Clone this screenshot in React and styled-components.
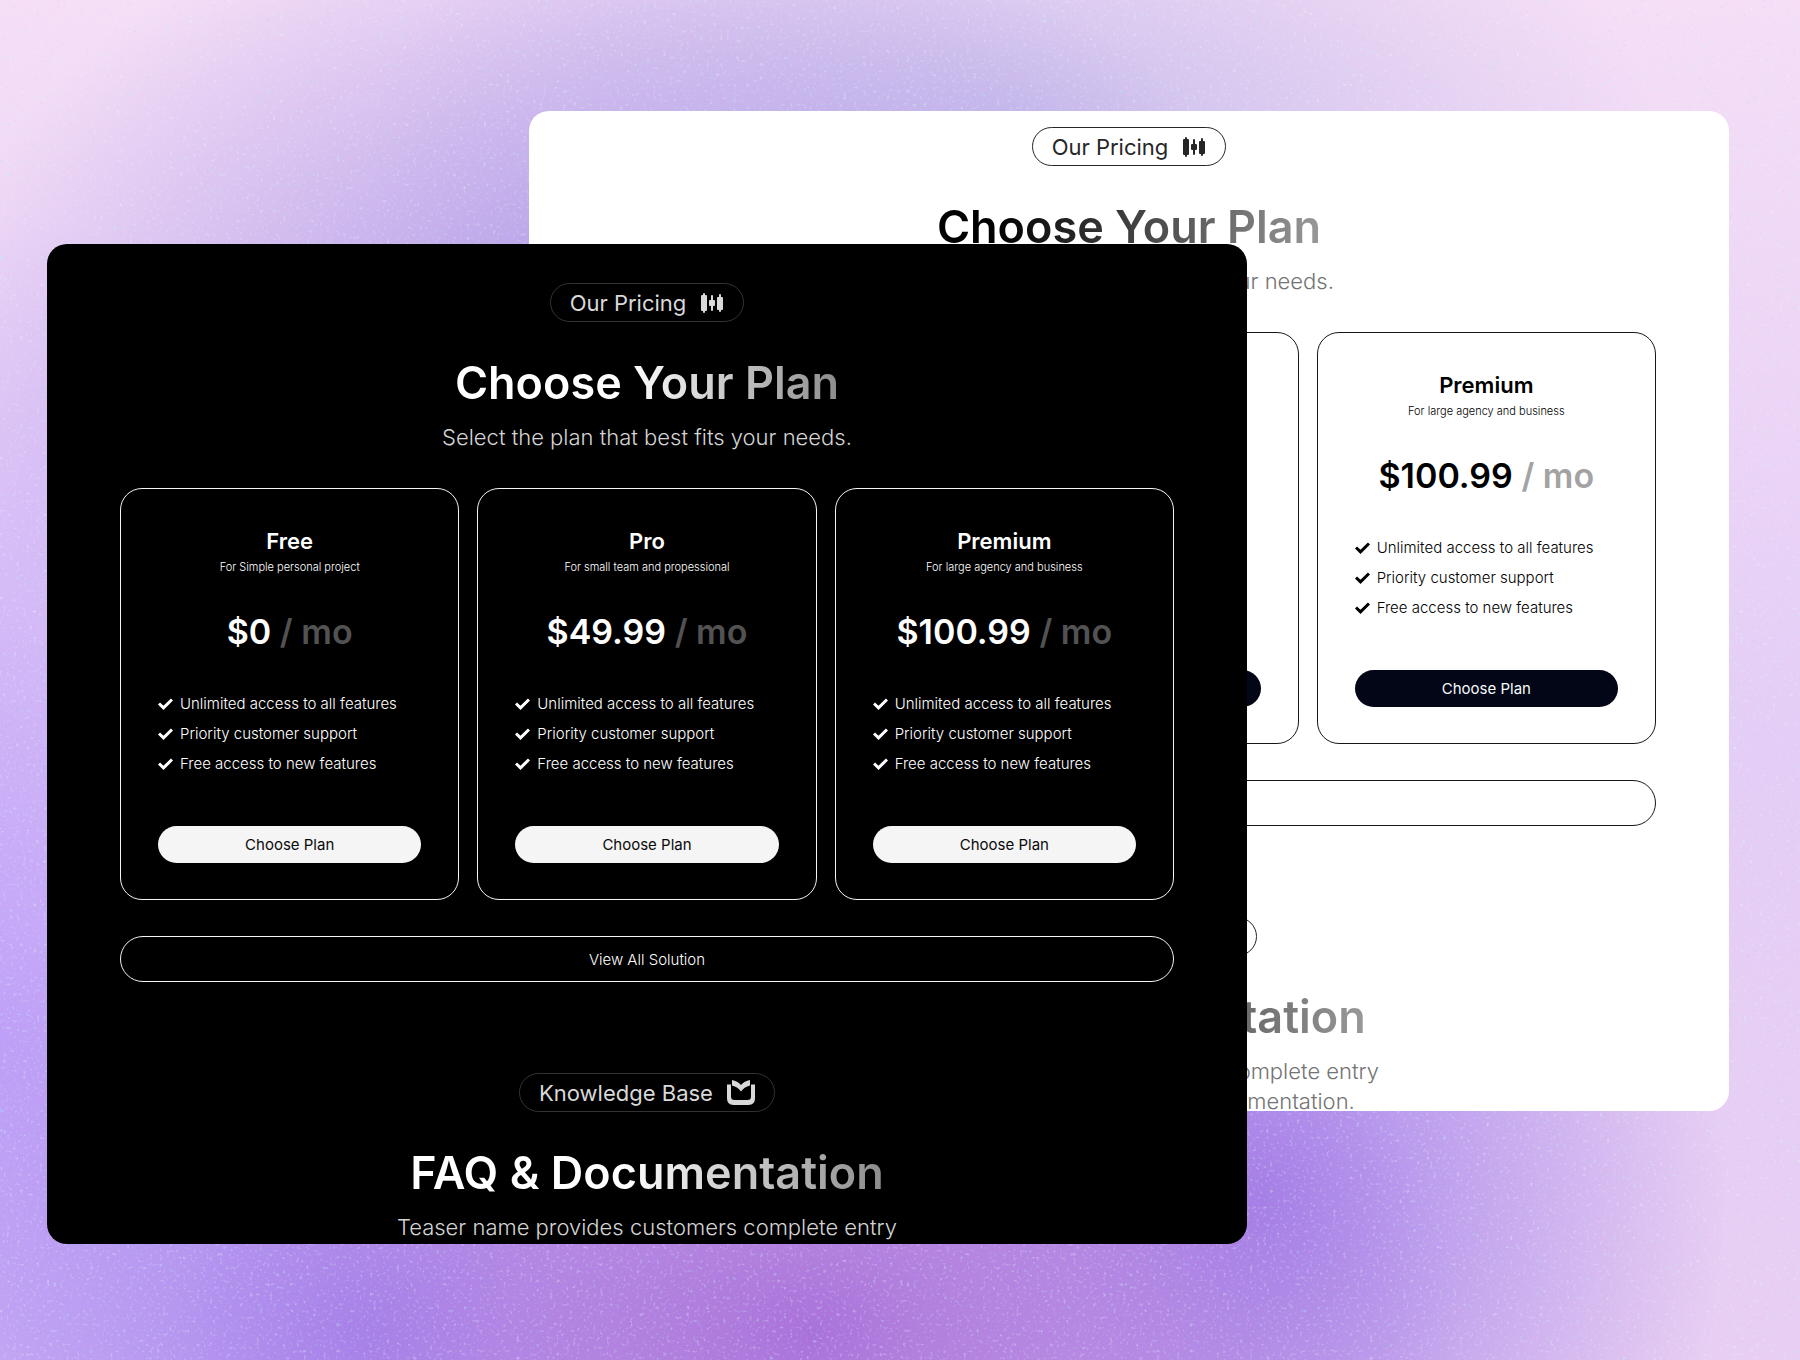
import React from 'react';
import styled, { createGlobalStyle, ThemeProvider } from 'styled-components';

const dark = {
  background: '#000000',
  text: '#ffffff',
  muted: '#d4d4d4',
  badgeText: '#d9d9d9',
  badgeBorder: '#333333',
  border: '#f5f5f5',
  period: '#525252',
  button: '#f5f5f5',
  buttonText: '#0a0a0a',
  heading: 'linear-gradient(90deg, #ffffff 45%, #8c8c8c 100%)',
};

const light = {
  background: '#ffffff',
  text: '#000000',
  muted: '#737373',
  badgeText: '#262626',
  badgeBorder: '#262626',
  border: '#171717',
  period: '#a3a3a3',
  button: '#020617',
  buttonText: '#f8fafc',
  heading: 'linear-gradient(90deg, #000000 15%, #999999 100%)',
};

const GlobalStyle = createGlobalStyle`
  * {
    box-sizing: border-box;
  }

  body {
    margin: 0;
    font-family: Inter, 'Liberation Sans', sans-serif;
  }

  h1, h2, h3, p, ul {
    margin: 0;
    padding: 0;
    font-weight: inherit;
  }
`;

const Stage = styled.main`
  position: relative;
  min-height: 100vh;
  overflow: hidden;
  background:
    radial-gradient(ellipse 36% 36% at 45% 98%, #a972da 0%, rgba(169, 114, 218, 0) 100%),
    radial-gradient(ellipse 30% 36% at 20% 98%, #a687ee 0%, rgba(166, 135, 238, 0) 100%),
    radial-gradient(ellipse 26% 40% at 70% 88%, #a583ea 0%, rgba(165, 131, 234, 0) 100%),
    radial-gradient(ellipse 30% 60% at 0% 76%, #c0a2f8 0%, rgba(192, 162, 248, 0) 100%),
    radial-gradient(ellipse 38% 36% at 34% 27%, #ac98e6 0%, rgba(172, 152, 230, 0) 100%),
    radial-gradient(ellipse 36% 22% at 56% 10%, #c9bdec 0%, rgba(201, 189, 236, 0) 100%),
    linear-gradient(180deg, #f5def6 0%, #e4cdf6 55%, #e8cef2 100%);
`;

const Grain = styled.svg`
  position: absolute;
  inset: 0;
  width: 100%;
  height: 100%;
  opacity: 0.35;
`;

const Window = styled.section`
  position: absolute;
  left: ${props => props.$left};
  top: ${props => props.$top};
  width: 1200px;
  height: 1000px;
  max-width: 100%;
  padding: ${props => props.$padding} 73px 0;
  overflow: hidden;
  border-radius: 20px;
  background: ${props => props.theme.background};
  color: ${props => props.theme.text};
`;

const Intro = styled.header`
  display: flex;
  flex-direction: column;
  align-items: center;
  text-align: center;
`;

const Badge = styled.div`
  display: flex;
  align-items: center;
  gap: 14px;
  height: 39px;
  padding: 0 19px;
  border: 1px solid ${props => props.theme.badgeBorder};
  border-radius: 20px;
  color: ${props => props.theme.badgeText};
  font-size: 22px;
`;

const Heading = styled.h2`
  margin-top: 30px;
  background: ${props => props.theme.heading};
  background-clip: text;
  -webkit-background-clip: text;
  color: transparent;
  font-size: 45px;
  font-weight: 600;
  line-height: 62px;
`;

const Lead = styled.p`
  margin-top: 8px;
  color: ${props => props.theme.muted};
  font-size: 22px;
  font-weight: 300;
  line-height: 30px;
  white-space: pre-line;
`;

const Plans = styled.div`
  display: grid;
  grid-template-columns: repeat(3, 1fr);
  gap: 18px;
  margin-top: 36px;
`;

const Card = styled.article`
  display: flex;
  flex-direction: column;
  padding: 36px 37px;
  border: 1px solid ${props => props.theme.border};
  border-radius: 22px;
  text-align: center;
`;

const PlanName = styled.h3`
  font-size: 22px;
  font-weight: 600;
  line-height: 32px;
`;

const PlanNote = styled.p`
  font-size: 11px;
  font-weight: 300;
  line-height: 20px;
`;

const Price = styled.p`
  margin-top: 33px;
  font-size: 34px;
  font-weight: 600;
  line-height: 44px;
`;

const Period = styled.span`
  color: ${props => props.theme.period};
`;

const Features = styled.ul`
  display: grid;
  gap: 10px;
  margin-top: 40px;
  list-style: none;
`;

const Feature = styled.li`
  display: flex;
  align-items: center;
  gap: 7px;
  font-size: 15px;
  font-weight: 300;
  line-height: 20px;
`;

const ChooseButton = styled.button`
  height: 37px;
  margin-top: 52px;
  border: 0;
  border-radius: 19px;
  background: ${props => props.theme.button};
  color: ${props => props.theme.buttonText};
  font: 400 15px Inter, sans-serif;
  cursor: pointer;
`;

const ViewAllButton = styled.button`
  display: block;
  width: 100%;
  height: 46px;
  margin: 36px 0 91px;
  border: 1px solid ${props => props.theme.border};
  border-radius: 23px;
  background: transparent;
  color: inherit;
  font: 300 15px Inter, sans-serif;
  cursor: pointer;
`;

const CandlesIcon = () => (
  <svg width="24" height="20" viewBox="0 0 24 20" fill="currentColor" aria-hidden="true">
    <rect x="1" y="2" width="6" height="16" rx="1" />
    <rect x="3" y="0" width="2" height="20" rx="1" />
    <rect x="9" y="7" width="6" height="6" rx="1" />
    <rect x="11" y="2" width="2" height="16" rx="1" />
    <rect x="17" y="4" width="6" height="13" rx="1" />
    <rect x="19" y="1" width="2" height="18" rx="1" />
  </svg>
);

const BookIcon = () => (
  <svg width="28" height="25" viewBox="0 0 28 25" fill="currentColor" aria-hidden="true">
    <path d="M5 0C8.500 0.500 12 2.500 14 5C16 2.500 19.500 0.500 23 0V5.500C19 6.500 16 8.500 14 11.500C12 8.500 9 6.500 5 5.500Z" />
    <path d="M0 4.500H4V16.500Q4 20 7.500 20H20.500Q24 20 24 16.500V4.500H28V18.500Q28 25 21.500 25H6.500Q0 25 0 18.500Z" />
  </svg>
);

const CheckIcon = () => (
  <svg width="15" height="12" viewBox="0 0 15 12" fill="none" stroke="currentColor" strokeWidth="3" aria-hidden="true">
    <path d="M1 5.500L5.500 9.800L14 1.500" />
  </svg>
);

const plans = [
  { name: 'Free', note: 'For Simple personal project', price: '$0' },
  { name: 'Pro', note: 'For small team and propessional', price: '$49.99' },
  { name: 'Premium', note: 'For large agency and business', price: '$100.99' },
];

const features = [
  'Unlimited access to all features',
  'Priority customer support',
  'Free access to new features',
];

const PricingPage = () => (
  <>
    <Intro>
      <Badge>
        Our Pricing
        <CandlesIcon />
      </Badge>
      <Heading>Choose Your Plan</Heading>
      <Lead>Select the plan that best fits your needs.</Lead>
    </Intro>

    <Plans>
      {plans.map((plan) => (
        <Card key={plan.name}>
          <PlanName>{plan.name}</PlanName>
          <PlanNote>{plan.note}</PlanNote>
          <Price>
            {plan.price} <Period>/ mo</Period>
          </Price>
          <Features>
            {features.map((feature) => (
              <Feature key={feature}>
                <CheckIcon />
                {feature}
              </Feature>
            ))}
          </Features>
          <ChooseButton type="button">Choose Plan</ChooseButton>
        </Card>
      ))}
    </Plans>
    <ViewAllButton type="button">View All Solution</ViewAllButton>

    <Intro>
      <Badge>
        Knowledge Base
        <BookIcon />
      </Badge>
      <Heading>FAQ &amp; Documentation</Heading>
      <Lead>{'Teaser name provides customers complete entry\npoints to all product and API documentation.'}</Lead>
    </Intro>
  </>
);

const App = () => (
  <>
    <GlobalStyle />
    <Stage>
      <Grain aria-hidden="true">
        <filter id="grain">
          <feTurbulence type="fractalNoise" baseFrequency="0.3" numOctaves="2" seed="4" />
          <feColorMatrix values="1.5 0 0 0 0  0 1.5 0 0 0.1  0 0 0.3 0 0.8  0 0 0 4 -2.300" />
        </filter>
        <rect width="100%" height="100%" filter="url(#grain)" />
      </Grain>
      <ThemeProvider theme={light}>
        <Window $left="529px" $top="111px" $padding="16px">
          <PricingPage />
        </Window>
      </ThemeProvider>
      <ThemeProvider theme={dark}>
        <Window $left="47px" $top="244px" $padding="39px">
          <PricingPage />
        </Window>
      </ThemeProvider>
    </Stage>
  </>
);

export default App;
